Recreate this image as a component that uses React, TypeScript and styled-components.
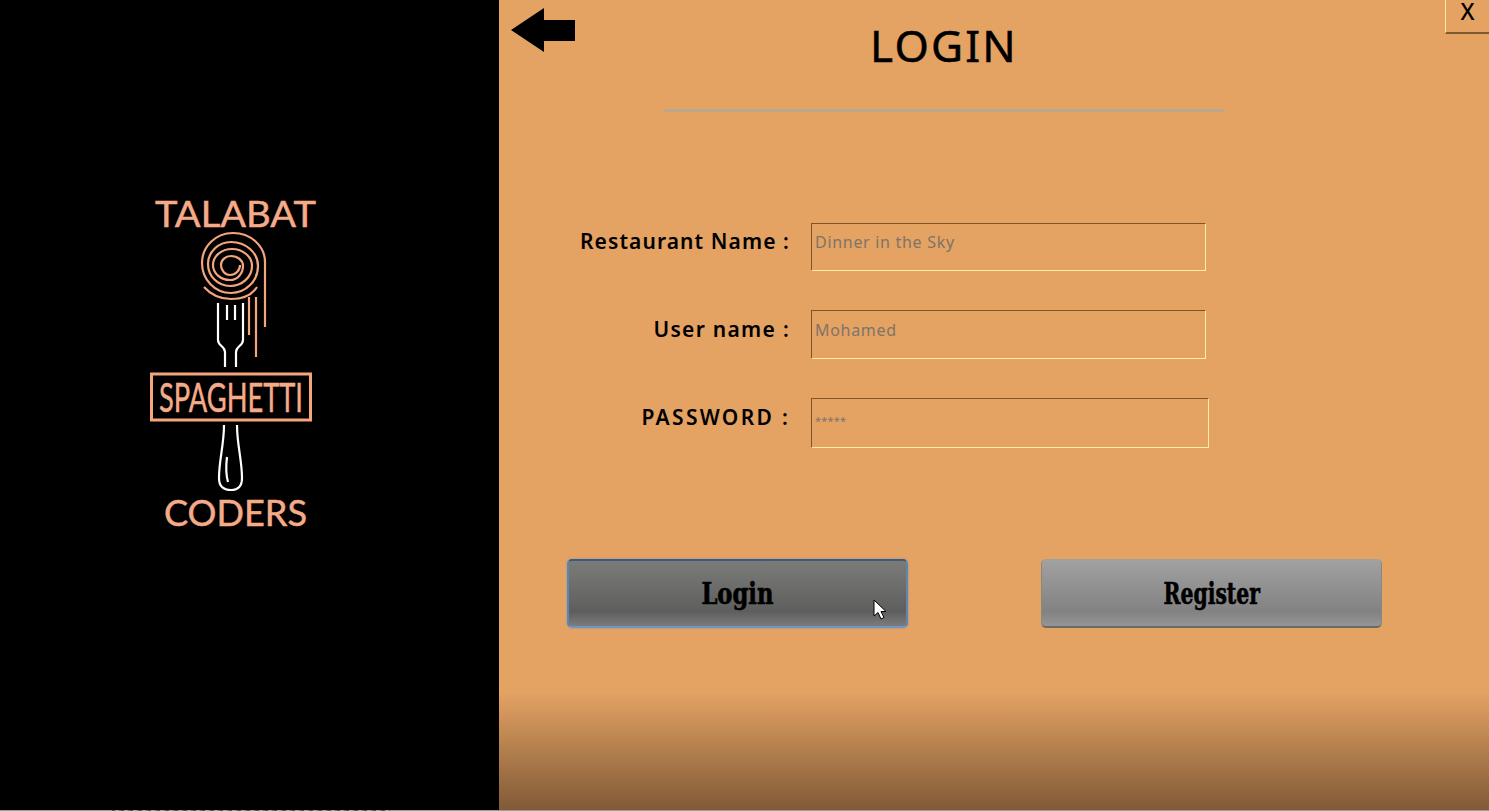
import { createGlobalStyle, styled } from 'styled-components';

const GlobalStyle = createGlobalStyle`
  html, body {
    margin: 0;
    padding: 0;
    background: #9c9c9c;
  }
  * {
    box-sizing: border-box;
  }
`;

const Screen = styled.div`
  display: flex;
  flex-direction: column;
  width: 1489px;
  height: 811px;
  overflow: hidden;
  font-family: 'Noto Sans', 'Liberation Sans', sans-serif;
`;

const Panels = styled.div`
  display: flex;
  height: 810px;
`;

// the 1px leftover of the window behind, noisy under the logo side
const BottomEdge = styled.div`
  height: 1px;
  background:
    repeating-linear-gradient(to right, #555 0 3px, #a8a8a8 3px 7px, #777 7px 9px) 112px 0 / 278px 1px no-repeat,
    #9c9c9c;
`;

const BrandPanel = styled.aside`
  width: 499px;
  background: #000;
  padding: 190px 0 0 145px;
`;

const LoginPanel = styled.main`
  flex: 1;
  display: flex;
  flex-direction: column;
  background: linear-gradient(to bottom, #e4a263 0%, #e4a263 85.5%, #805a37 100%);
`;

const TopRow = styled.header`
  display: grid;
  grid-template-columns: 346px 198px 1fr;
  height: 109px;
`;

const BackArrow = styled.svg`
  margin: 8px 0 0 11px;
  width: 66px;
  height: 46px;
`;

const Title = styled.h1`
  margin: 18px 0 0;
  font-size: 44px;
  line-height: 54px;
  font-weight: 400;
  letter-spacing: 2.2px;
  text-align: center;
  -webkit-text-stroke: 0.5px #000;
  color: #000;
`;

const CloseButton = styled.button`
  justify-self: end;
  width: 44px;
  height: 34px;
  padding: 0 0 10px;
  border: none;
  border-left: 1px solid #ffe9a0;
  border-bottom: 2px solid #7f5a2c;
  background: transparent;
  font-family: inherit;
  font-size: 23px;
  font-weight: 500;
  line-height: 20px;
  color: #000;
`;

const Divider = styled.div`
  width: 560px;
  height: 3px;
  margin-left: 165px;
  background: #b9a78f;
`;

const Form = styled.form`
  display: flex;
  flex-direction: column;
  margin-top: 111px;
`;

const FieldRow = styled.div<{ $gap: number }>`
  display: flex;
  gap: 21px;
  margin-bottom: ${({ $gap }) => $gap}px;
`;

const FieldLabel = styled.label<{ $top: number; $spacing: number }>`
  width: 291px;
  padding-top: ${({ $top }) => $top}px;
  font-size: 21px;
  line-height: 32px;
  font-weight: 600;
  letter-spacing: ${({ $spacing }) => $spacing}px;
  text-align: right;
  white-space: nowrap;
  color: #000;
`;

const FieldInput = styled.input<{ $w: number; $h: number; $pad: number; $small?: boolean }>`
  width: ${({ $w }) => $w}px;
  height: ${({ $h }) => $h}px;
  padding: 0 0 ${({ $pad }) => $pad}px 3px;
  border: 1px solid;
  border-color: #7f5426 #ffeea0 #ffeea0 #7f5426;
  border-radius: 0;
  outline: none;
  background: transparent;
  font-family: inherit;
  font-size: ${({ $small }) => ($small ? 11 : 16)}px;
  letter-spacing: ${({ $small }) => ($small ? 0.2 : 0.7)}px;

  &::placeholder {
    color: #7f7466;
    opacity: 1;
  }
`;

const ButtonRow = styled.div`
  display: flex;
  gap: 133px;
  margin: 111px 0 0 68px;
`;

const ActionButton = styled.button<{ $active?: boolean }>`
  position: relative;
  width: 341px;
  height: 69px;
  padding: ${({ $active }) => ($active ? '0' : '2px 0 0')};
  border-radius: 5px;
  border: ${({ $active }) => ($active ? '2px solid #5d84b3' : '1px solid #8a8782')};
  border-top-color: ${({ $active }) => ($active ? '#3e5a78' : '#a0a0a0')};
  border-bottom: 2px solid ${({ $active }) => ($active ? '#6f95c0' : '#6c6a66')};
  box-shadow: ${({ $active }) => ($active ? '0 0 2px #6f95c0' : 'none')};
  background: ${({ $active }) =>
    $active
      ? 'linear-gradient(to bottom, #7b7b78 0%, #5e5e5e 78%, #7c7c7c 100%)'
      : 'linear-gradient(to bottom, #a1a1a1 0%, #828282 78%, #959595 100%)'};
`;

const ButtonLabel = styled.span<{ $scale: number }>`
  display: inline-block;
  transform: scaleX(${({ $scale }) => $scale});
  font-family: 'DejaVu Serif Condensed', 'DejaVu Serif', serif;
  font-weight: 700;
  font-size: 29px;
  -webkit-text-stroke: 0.6px #000;
  color: #000;
`;

const Pointer = styled.svg`
  position: absolute;
  left: 304px;
  top: 38px;
  width: 14px;
  height: 22px;
`;

const SpiralLine = styled.path`
  fill: none;
  stroke: #f3a57e;
  stroke-width: 2.2;
`;

const ForkLine = styled.path`
  fill: none;
  stroke: #fff;
  stroke-width: 2.2;
`;

const LogoFrame = styled.rect`
  fill: none;
  stroke: #f3a57e;
  stroke-width: 3;
`;

const LogoText = styled.text`
  fill: #f6ab88;
  stroke: #f6ab88;
  stroke-width: 0.5;
  font-family: 'Lato', 'Liberation Sans', sans-serif;
`;

const Logo = () => (
  <svg width="180" height="345" viewBox="145 190 180 345">
    <LogoText x="155" y="227" fontSize="37" textLength="161" lengthAdjust="spacingAndGlyphs">
      TALABAT
    </LogoText>
    <SpiralLine d="M265 327 V262 A32 29 0 0 0 233 233 A31 30 0 0 0 202 263 A29 30 0 0 0 231 293 A27 27 0 0 0 258 266 A27 24 0 0 0 231 242 A23 22 0 0 0 208 264 A22 22 0 0 0 230 286 A22 20 0 0 0 252 266 A20 17 0 0 0 232 249 A19 16 0 0 0 213 265 A17 15 0 0 0 230 280 A13 14 0 0 0 243 266 A12 10 0 0 0 231 256 A10 9 0 0 0 221 265 A9 10 0 0 0 230 275 A10 10 0 0 0 240 265" />
    <SpiralLine d="M204 287 C212 296 222 299 231 299 C242 299 252 295 257 287" />
    <SpiralLine d="M249 297 V335" />
    <SpiralLine d="M256 297 V357" />
    <ForkLine d="M218 303 V340 C218 346 225 346 225 352 V367" />
    <ForkLine d="M243 303 V340 C243 346 236 346 236 352 V367" />
    <ForkLine d="M227 305 V320" />
    <ForkLine d="M235 305 V320" />
    <LogoFrame x="151.5" y="374" width="159" height="46" />
    <LogoText x="159" y="412" fontSize="40" textLength="144" lengthAdjust="spacingAndGlyphs">
      SPAGHETTI
    </LogoText>
    <ForkLine d="M224 425 C224 445 219 460 219 478 C219 487 224 490 231 490 C238 490 242 487 242 478 C242 460 237 445 237 425" />
    <ForkLine d="M227 457 C226 465 226 475 228 482" />
    <LogoText x="164" y="526" fontSize="36" textLength="143" lengthAdjust="spacingAndGlyphs">
      CODERS
    </LogoText>
  </svg>
);

const fields = [
  { id: 'restaurant', label: 'Restaurant Name :', placeholder: 'Dinner in the Sky', w: 395, h: 48, pad: 11, gap: 39, top: 2, spacing: 1.1 },
  { id: 'user', label: 'User name :', placeholder: 'Mohamed', w: 395, h: 49, pad: 10, gap: 39, top: 3, spacing: 1.3 },
  { id: 'password', label: 'PASSWORD :', placeholder: '*****', w: 398, h: 50, pad: 6, gap: 0, top: 3, spacing: 2.3, small: true },
];

const App = () => {
  return (
    <>
      <GlobalStyle />
      <Screen>
        <Panels>
          <BrandPanel>
            <Logo />
          </BrandPanel>
          <LoginPanel>
            <TopRow>
              <BackArrow viewBox="0 0 66 46">
                <path d="M1 22 L34 0 V12 H65 V33 H34 V44 Z" fill="#000" />
              </BackArrow>
              <Title>LOGIN</Title>
              <CloseButton type="button">X</CloseButton>
            </TopRow>
            <Divider />
            <Form>
              {fields.map((field) => (
                <FieldRow key={field.id} $gap={field.gap}>
                  <FieldLabel htmlFor={field.id} $top={field.top} $spacing={field.spacing}>
                    {field.label}
                  </FieldLabel>
                  <FieldInput
                    id={field.id}
                    placeholder={field.placeholder}
                    $w={field.w}
                    $h={field.h}
                    $pad={field.pad}
                    $small={field.small}
                  />
                </FieldRow>
              ))}
              <ButtonRow>
                <ActionButton type="button" $active>
                  <ButtonLabel $scale={0.87}>Login</ButtonLabel>
                  <Pointer viewBox="0 0 14 22">
                    <path d="M1 1 V17 L5 13.5 L8 20 L11 18.5 L8 12.5 H13 Z" fill="#fff" stroke="#000" strokeWidth="1" />
                  </Pointer>
                </ActionButton>
                <ActionButton type="button">
                  <ButtonLabel $scale={0.78}>Register</ButtonLabel>
                </ActionButton>
              </ButtonRow>
            </Form>
          </LoginPanel>
        </Panels>
        <BottomEdge />
      </Screen>
    </>
  );
};

export default App;
